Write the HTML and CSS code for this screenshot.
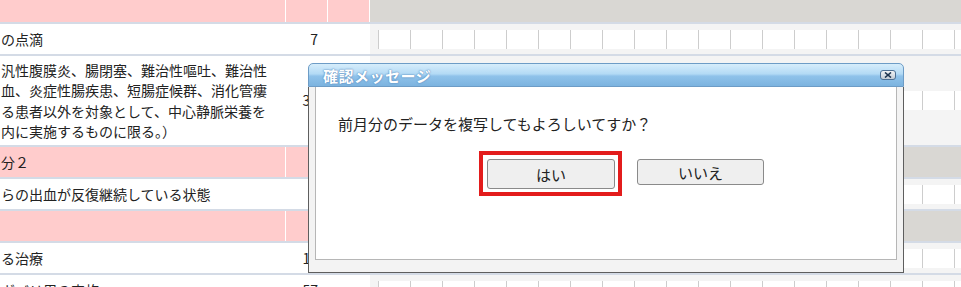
FILE: index.html
```html
<!DOCTYPE html>
<html lang="ja">
<head>
    <meta charset="UTF-8">
    <title>月次データ</title>
    <link rel="stylesheet" href="styles.css">
</head>
<body>
    <div class="grid">
        <div class="row row-head row-pink">
            <div class="cell name"></div>
            <div class="cell num"></div>
            <div class="cell num"></div>
            <div class="days"></div>
        </div>
        <div class="row">
            <div class="cell name">の点滴</div>
            <div class="cell num">7</div>
            <div class="cell num"></div>
            <div class="days"><div class="day-strip"></div></div>
        </div>
        <div class="row row-tall">
            <div class="cell name">汎性腹膜炎、腸閉塞、難治性嘔吐、難治性<br>血、炎症性腸疾患、短腸症候群、消化管瘻<br>る患者以外を対象として、中心静脈栄養を<br>内に実施するものに限る。）</div>
            <div class="cell num">30</div>
            <div class="cell num"></div>
            <div class="days"><div class="day-strip"></div></div>
        </div>
        <div class="row row-pink">
            <div class="cell name">分２</div>
            <div class="cell num"></div>
            <div class="cell num"></div>
            <div class="days"></div>
        </div>
        <div class="row">
            <div class="cell name">らの出血が反復継続している状態</div>
            <div class="cell num"></div>
            <div class="cell num"></div>
            <div class="days"><div class="day-strip"></div></div>
        </div>
        <div class="row row-pink">
            <div class="cell name"></div>
            <div class="cell num"></div>
            <div class="cell num"></div>
            <div class="days"></div>
        </div>
        <div class="row">
            <div class="cell name">る治療</div>
            <div class="cell num">10</div>
            <div class="cell num"></div>
            <div class="days"><div class="day-strip"></div></div>
        </div>
        <div class="row">
            <div class="cell name">ガバリ用の実施</div>
            <div class="cell num">57</div>
            <div class="cell num"></div>
            <div class="days"><div class="day-strip"></div></div>
        </div>
    </div>

    <div class="dialog">
        <div class="dialog-title">
            <span class="dialog-caption">確認メッセージ</span>
            <span class="dialog-close">
                <svg width="8" height="6" viewBox="0 0 8 6">
                    <path d="M1 0.5 L7 5.5 M7 0.5 L1 5.5" stroke="#1f3550" stroke-width="1.6"/>
                </svg>
            </span>
        </div>
        <div class="dialog-body">
            <div class="dialog-panel">
                <p class="dialog-message">前月分のデータを複写してもよろしいてすか？</p>
                <div class="dialog-buttons">
                    <span class="focus-mark"><button type="button" class="btn btn-yes">はい</button></span>
                    <button type="button" class="btn btn-no">いいえ</button>
                </div>
            </div>
        </div>
    </div>
</body>
</html>
```

FILE: styles.css
```css
* {
    box-sizing: border-box;
}

body {
    margin: 0;
    width: 961px;
    height: 287px;
    overflow: hidden;
    position: relative;
    background: #fff;
    color: #222;
    font-family: "Noto Sans CJK JP", "Noto Sans", sans-serif;
}

.row {
    display: flex;
    height: 32px;
    border-bottom: 2px solid #d4dbe6;
}

.row-head {
    height: 24px;
}

.row-tall {
    height: 91px;
}

.cell {
    display: flex;
    align-items: center;
    border-right: 1px solid #fff;
    font-size: 14px;
    line-height: 20.5px;
    white-space: nowrap;
    overflow: hidden;
}

.name {
    width: 286px;
    padding-left: 1px;
}

.num {
    width: 42px;
    padding-right: 9px;
    justify-content: flex-end;
}

.days {
    flex: 1;
    display: flex;
    align-items: center;
    padding-left: 8px;
    background: #f4f4f4;
}

.day-strip {
    flex: 1;
    height: 19px;
    background: repeating-linear-gradient(to right, #cdcdcd 0 1px, #fff 1px 32px);
}

.row-pink .cell {
    background: #ffcccc;
}

.row-pink .days {
    background: #d9d7d3;
}

/* dialog */
.dialog {
    position: absolute;
    left: 308px;
    top: 63px;
    width: 596px;
}

.dialog-title {
    height: 24px;
    display: flex;
    align-items: center;
    justify-content: space-between;
    padding: 0 7px 0 14px;
    border: 1px solid #6d9cc6;
    border-radius: 5px 5px 0 0;
    background: linear-gradient(#d6edfb, #b3daf5 45%, #8fc2ea 55%, #7cb3df);
}

.dialog-caption {
    color: #fff;
    font-size: 15px;
    font-weight: bold;
    letter-spacing: 0.5px;
    text-shadow: 0 0 2px #5a8cbf, 0 0 1px #5a8cbf;
}

.dialog-close {
    width: 16px;
    height: 10px;
    display: flex;
    align-items: center;
    justify-content: center;
    border: 1px solid #4d6f93;
    border-radius: 3px;
    background: linear-gradient(#f1f3f5, #c3ccd6);
}

.dialog-body {
    padding: 0 6px 12px;
    background: #f3f3f3;
    border: 1px solid #5e5e5e;
    border-top: 0;
}

.dialog-panel {
    height: 173px;
    background: #fff;
    border: 1px solid #b6b6b6;
    border-top: 0;
}

.dialog-message {
    margin: 0;
    padding: 27px 0 0 22px;
    font-size: 15px;
    line-height: 20px;
}

.dialog-buttons {
    display: flex;
    align-items: flex-start;
    margin-top: 17px;
    padding-left: 163px;
}

.focus-mark {
    display: block;
    border: 4px solid #e31c1c;
    padding: 4px 3px 3px 4px;
}

.btn {
    display: block;
    padding: 0;
    border: 1px solid #8a8a8a;
    border-radius: 3px;
    background: #efefef;
    color: #222;
    font-family: inherit;
    font-size: 15px;
}

.btn-yes {
    width: 128px;
    height: 30px;
}

.btn-no {
    width: 127px;
    height: 26px;
    margin: 8px 0 0 15px;
}
```
